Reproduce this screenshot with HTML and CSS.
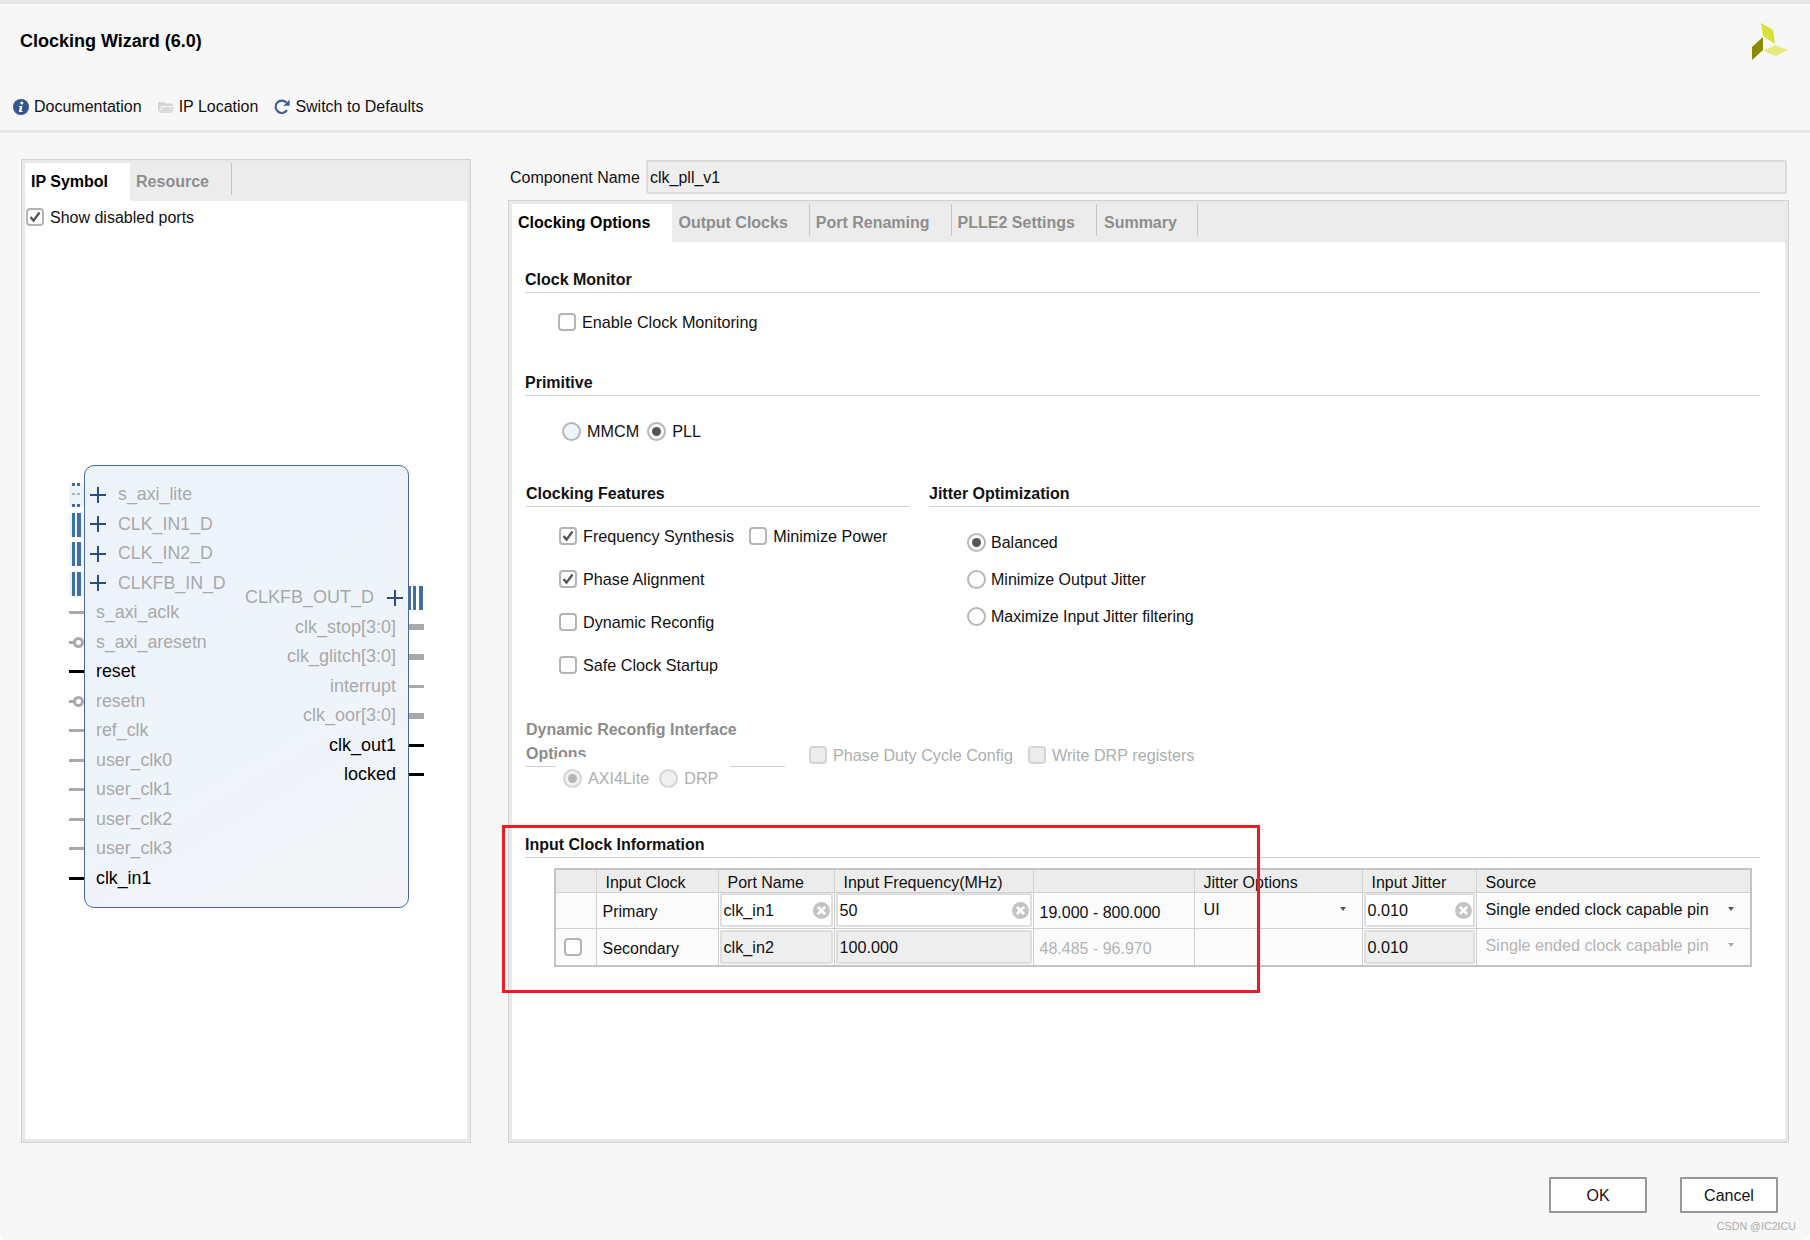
FILE: index.html
```html
<!DOCTYPE html>
<html lang="en">
<head>
<meta charset="utf-8">
<title>Clocking Wizard (6.0)</title>
<link rel="stylesheet" href="styles.css">
</head>
<body>
<svg class="sprite" aria-hidden="true">
  <symbol id="clear" viewBox="0 0 16 16">
    <circle cx="8" cy="8" r="8" fill="#c4c4c4"/>
    <path d="M4.6 4.6l6.8 6.8M11.4 4.6l-6.8 6.8" stroke="#fff" stroke-width="2.6"/>
  </symbol>
  <symbol id="check" viewBox="0 0 14 14">
    <path d="M2.5 7l3 3.6L11.5 2.5" fill="none" stroke="#555" stroke-width="2.4"/>
  </symbol>
</svg>
<div class="app">
  <header class="head">
    <div class="title-row">
      <div class="title">Clocking Wizard (6.0)</div>
      <svg class="logo" viewBox="0 0 37 38">
        <polygon points="9,0 21,7 23,21 11,13" fill="#d9e136"/>
        <polygon points="11,14 11,27 0,37 0,24" fill="#8b8b00"/>
        <polygon points="11,28 23,22 36,27 24,33" fill="#e6ea7c"/>
      </svg>
    </div>
    <nav class="toolbar">
      <span class="tool">
        <svg class="tool-ico" viewBox="0 0 16 16"><circle cx="8" cy="8" r="8" fill="#34558f"/><circle cx="8.8" cy="4" r="1.5" fill="#fff"/><path d="M6.2 7h3.2l-1 5h1.1v1H5.9l1-5H6z" fill="#fff"/></svg>
        Documentation
      </span>
      <span class="tool">
        <svg class="tool-ico" viewBox="0 0 16 16"><path d="M0 3h6l1.5 1.5H15V7H3L1 13H0z" fill="#d6d6d6"/><path d="M3.5 8H16l-2 6H1.2z" fill="#dcdcdc"/></svg>
        IP Location
      </span>
      <span class="tool">
        <svg class="tool-ico" viewBox="0 0 16 16"><path d="M13 11.2A6.2 6.2 0 1 1 12.4 3.6" fill="none" stroke="#3d5f99" stroke-width="2.2"/><path d="M15.6 0.6v6.2H9.4z" fill="#3d5f99"/></svg>
        Switch to Defaults
      </span>
    </nav>
  </header>

  <main class="main">
    <section class="left-panel">
      <div class="tabs">
        <div class="tab active">IP Symbol</div>
        <div class="tab">Resource</div>
      </div>
      <div class="panel-body">
        <label class="opt show-ports"><span class="cb"><svg class="tick"><use href="#check"/></svg></span>Show disabled ports</label>
        <div class="symbol">
          <div class="pins-left">
            <div class="pin bus"><svg class="dots" viewBox="0 0 15 24"><rect width="15" height="24" fill="#eef3fa"/><rect x="3" width="3" height="3" fill="#3f6fa5"/><rect x="8" width="3" height="3" fill="#3f6fa5"/><rect x="3" y="10" width="3" height="2" fill="#9db8d6"/><rect x="8" y="10" width="3" height="2" fill="#9db8d6"/><rect x="3" y="21" width="3" height="3" fill="#3f6fa5"/><rect x="8" y="21" width="3" height="3" fill="#3f6fa5"/></svg><span class="plus"></span>s_axi_lite</div>
            <div class="pin bus"><span class="bars-l"></span><span class="plus"></span>CLK_IN1_D</div>
            <div class="pin bus"><span class="bars-l"></span><span class="plus"></span>CLK_IN2_D</div>
            <div class="pin bus"><span class="bars-l"></span><span class="plus"></span>CLKFB_IN_D</div>
            <div class="pin"><span class="stub"></span>s_axi_aclk</div>
            <div class="pin"><span class="stub inv"></span>s_axi_aresetn</div>
            <div class="pin on"><span class="stub"></span>reset</div>
            <div class="pin"><span class="stub inv"></span>resetn</div>
            <div class="pin"><span class="stub"></span>ref_clk</div>
            <div class="pin"><span class="stub"></span>user_clk0</div>
            <div class="pin"><span class="stub"></span>user_clk1</div>
            <div class="pin"><span class="stub"></span>user_clk2</div>
            <div class="pin"><span class="stub"></span>user_clk3</div>
            <div class="pin on"><span class="stub"></span>clk_in1</div>
          </div>
          <div class="pins-right">
            <div class="pin bus">CLKFB_OUT_D<span class="plus"></span><span class="bars-r"></span></div>
            <div class="pin">clk_stop[3:0]<span class="stub thick"></span></div>
            <div class="pin">clk_glitch[3:0]<span class="stub thick"></span></div>
            <div class="pin">interrupt<span class="stub"></span></div>
            <div class="pin">clk_oor[3:0]<span class="stub thick"></span></div>
            <div class="pin on">clk_out1<span class="stub"></span></div>
            <div class="pin on">locked<span class="stub"></span></div>
          </div>
        </div>
      </div>
    </section>

    <section class="right-col">
      <div class="comp-row">
        <span class="comp-label">Component Name</span>
        <div class="comp-input">clk_pll_v1</div>
      </div>
      <div class="right-panel">
        <div class="tabs">
          <div class="tab active">Clocking Options</div>
          <div class="tab">Output Clocks</div>
          <div class="tab">Port Renaming</div>
          <div class="tab">PLLE2 Settings</div>
          <div class="tab">Summary</div>
        </div>
        <div class="form">
          <h3 class="sec">Clock Monitor</h3>
          <div class="row enable-row">
            <label class="opt"><span class="cb"></span>Enable Clock Monitoring</label>
          </div>

          <h3 class="sec primitive-head">Primitive</h3>
          <div class="row primitive-row">
            <label class="opt"><span class="rb pale"></span>MMCM</label>
            <label class="opt"><span class="rb sel"></span>PLL</label>
          </div>

          <div class="two-col">
            <div class="features">
              <h3 class="sec">Clocking Features</h3>
              <div class="row feature-first">
                <label class="opt"><span class="cb"><svg class="tick"><use href="#check"/></svg></span>Frequency Synthesis</label>
                <label class="opt"><span class="cb"></span>Minimize Power</label>
              </div>
              <div class="row feature-row"><label class="opt"><span class="cb"><svg class="tick"><use href="#check"/></svg></span>Phase Alignment</label></div>
              <div class="row feature-row"><label class="opt"><span class="cb"></span>Dynamic Reconfig</label></div>
              <div class="row feature-row"><label class="opt"><span class="cb"></span>Safe Clock Startup</label></div>
            </div>
            <div class="jitter">
              <h3 class="sec">Jitter Optimization</h3>
              <div class="jitter-list">
                <label class="opt"><span class="rb sel"></span>Balanced</label>
                <label class="opt"><span class="rb"></span>Minimize Output Jitter</label>
                <label class="opt"><span class="rb"></span>Maximize Input Jitter filtering</label>
              </div>
            </div>
          </div>

          <div class="drp">
            <div class="drp-legend">
              <div class="drp-title">Dynamic Reconfig Interface Options</div>
              <span class="drp-patch"></span>
            </div>
            <div class="drp-checks">
              <label class="opt off"><span class="cb"></span>Phase Duty Cycle Config</label>
              <label class="opt off"><span class="cb"></span>Write DRP registers</label>
            </div>
          </div>
          <div class="row drp-radios">
            <label class="opt off"><span class="rb sel"></span>AXI4Lite</label>
            <label class="opt off"><span class="rb"></span>DRP</label>
          </div>

          <h3 class="sec input-head">Input Clock Information</h3>
          <table class="clock-table">
            <colgroup>
              <col class="c1"><col class="c2"><col class="c3"><col class="c4"><col class="c5"><col class="c6"><col class="c7"><col class="c8">
            </colgroup>
            <thead>
              <tr>
                <th></th><th>Input Clock</th><th>Port Name</th><th>Input Frequency(MHz)</th><th></th><th>Jitter Options</th><th>Input Jitter</th><th>Source</th>
              </tr>
            </thead>
            <tbody>
              <tr class="r1">
                <td></td>
                <td class="txt">Primary</td>
                <td class="box"><div class="field">clk_in1<svg class="clear"><use href="#clear"/></svg></div></td>
                <td class="box"><div class="field">50<svg class="clear"><use href="#clear"/></svg></div></td>
                <td class="txt range">19.000 - 800.000</td>
                <td class="sel-cell"><div class="select">UI<span class="arrow"></span></div></td>
                <td class="box"><div class="field">0.010<svg class="clear"><use href="#clear"/></svg></div></td>
                <td class="sel-cell"><div class="select">Single ended clock capable pin<span class="arrow"></span></div></td>
              </tr>
              <tr class="r2">
                <td class="cb-cell"><span class="cb"></span></td>
                <td class="txt">Secondary</td>
                <td class="box"><div class="field dis">clk_in2</div></td>
                <td class="box"><div class="field dis">100.000</div></td>
                <td class="txt range muted">48.485 - 96.970</td>
                <td></td>
                <td class="box"><div class="field dis">0.010</div></td>
                <td class="sel-cell"><div class="select muted">Single ended clock capable pin<span class="arrow pale-arrow"></span></div></td>
              </tr>
            </tbody>
          </table>
        </div>
      </div>
    </section>
  </main>

  <footer class="foot">
    <div class="buttons">
      <button class="btn" type="button">OK</button>
      <button class="btn" type="button">Cancel</button>
    </div>
    <div class="mark">CSDN @IC2ICU</div>
  </footer>

  <div class="highlight"></div>
</div>
</body>
</html>
```

FILE: styles.css
```css
*, *::before, *::after { box-sizing: border-box; }
html, body { margin: 0; padding: 0; background: #fff; }
body { font: 16px/26px "Liberation Sans", Arial, sans-serif; color: #111; }
.sprite { display: none; }

.app {
  position: relative;
  width: 1810px;
  height: 1240px;
  background: #f7f7f7;
  border-top: 4px solid #e6e6e6;
  border-radius: 0 0 8px 8px;
  overflow: hidden;
  display: flex;
  flex-direction: column;
}

/* header */
.head { height: 129px; border-bottom: 3px solid #e6e6e6; }
.title-row {
  height: 72px;
  display: flex;
  justify-content: space-between;
  align-items: center;
  padding: 2px 21px 0 20px;
}
.title { font-size: 18px; font-weight: 700; color: #000; }
.logo { width: 37px; height: 38px; margin-top: 2px; }
.toolbar { display: flex; gap: 16px; padding: 18px 0 0 13px; }
.tool { display: flex; align-items: center; gap: 5px; color: #111; }
.tool-ico { width: 16px; height: 16px; }

/* main */
.main { display: flex; gap: 37px; padding: 26px 21px 0; height: 1010px; }
.left-panel {
  width: 450px;
  border: 1px solid #d2d2d2;
  padding: 3px;
  background: #e9e9e9;
  display: flex;
  flex-direction: column;
}
.tabs { display: flex; height: 38px; background: #ececec; flex: none; }
.tab {
  height: 32px;
  line-height: 38px;
  padding: 0 22px 0 6px;
  font-weight: 700;
  color: #8e8e8e;
  border-right: 1px solid #c8c8c8;
  white-space: nowrap;
}
.tab.active {
  height: 38px;
  padding-right: 22px;
  background: #fff;
  color: #000;
  border-right: 0;
}
.right-panel .tab { padding-right: 21px; }
.right-panel .tab.active { padding-right: 22px; }
.right-panel .tab:last-child { padding: 0 20px 0 7px; }
.panel-body { flex: 1; background: #fff; padding-top: 3px; }

.opt { display: inline-flex; align-items: center; gap: 6px; height: 26px; padding-top: 2px; white-space: nowrap; color: #111; }
.cb {
  width: 18px; height: 18px;
  border: 2px solid #b4b4b4;
  border-radius: 4px;
  background: #fff;
  display: inline-flex;
  align-items: center;
  justify-content: center;
  flex: none;
}
.opt .cb, .opt .rb { margin-top: -2px; }
.row .opt, .drp-checks .opt { padding-top: 0; }
.row .opt .cb, .row .opt .rb, .drp-checks .opt .cb { margin-top: 0; }
.tick { width: 14px; height: 14px; }
.rb {
  width: 19px; height: 19px;
  border: 2px solid #b8b8b8;
  border-radius: 50%;
  background: #fff;
  display: inline-flex;
  align-items: center;
  justify-content: center;
  flex: none;
}
.rb.pale { background: #eef4fc; }
.rb.sel::after {
  content: "";
  width: 9px; height: 9px;
  border-radius: 50%;
  background: #555;
}
.opt.off { color: #aeaeae; }
.off .cb { background: #ececec; border-color: #d4d4d4; }
.off .rb { background: #f0f0f0; border-color: #d4d4d4; }
.off .rb.sel::after { background: #b5b5b5; }

.show-ports { margin-left: 1px; }

/* IP symbol */
.symbol {
  position: relative;
  width: 325px;
  height: 443px;
  margin: 233px 0 0 59px;
  border: 1.5px solid #47689f;
  border-radius: 10px;
  background: linear-gradient(150deg, #edf3fb 0%, #eff4fb 60%, #f4f4f6 100%);
  display: flex;
  justify-content: space-between;
  font-size: 17.8px;
}
.pins-left { padding-top: 14px; }
.pins-right { padding-top: 117px; text-align: right; font-size: 18px; }
.pin {
  position: relative;
  height: 29.5px;
  line-height: 29.5px;
  color: #a9a9a9;
  white-space: nowrap;
  display: flex;
  align-items: center;
}
.pins-left .pin { padding-left: 11px; }
.pins-left .pin.bus { padding-left: 5px; }
.pins-right .pin { padding-right: 12px; justify-content: flex-end; }
.pins-right .pin.bus { padding-right: 5px; }
.pin.on { color: #000; }

.plus {
  width: 16px; height: 16px;
  flex: none;
  background:
    linear-gradient(#2f4b86, #2f4b86) center / 16px 2px no-repeat,
    linear-gradient(#2f4b86, #2f4b86) center / 2px 16px no-repeat;
}
.pins-left .plus { margin-right: 12px; }
.pins-right .plus { margin-left: 13px; }

.stub {
  position: absolute;
  top: 50%;
  width: 15px;
  height: 3px;
  margin-top: -1.5px;
  background: #a9a9a9;
}
.pins-left .stub { left: -16px; }
.pins-right .stub { right: -16px; width: 15px; }
.stub.thick { height: 6px; margin-top: -3px; }
.on .stub { background: #000; }
.stub.inv {
  height: 11px;
  margin-top: -5.5px;
  overflow: hidden;
  background: linear-gradient(#a9a9a9, #a9a9a9) left center / 5px 3px no-repeat;
}
.stub.inv::after {
  content: "";
  position: absolute;
  left: 4px; top: 0;
  width: 11px; height: 11px;
  border: 3px solid #a9a9a9;
  border-radius: 50%;
}
.dots { position: absolute; left: -16px; top: 3px; width: 15px; height: 24px; }
.bars-l, .bars-r { position: absolute; top: 3px; height: 24px; }
.bars-l {
  left: -16px;
  width: 15px;
  background: linear-gradient(90deg, #eef3fa 0 3px, #3f6fa5 3px 6px, #eef3fa 6px 8px, #3f6fa5 8px 12px, #eef3fa 12px);
}
.bars-r {
  right: -16px;
  width: 15px;
  background: linear-gradient(90deg, #3f6fa5 0 2px, #fff 2px 4px, #3f6fa5 4px 7px, #fff 7px 10px, #3f6fa5 10px 14px, #fff 14px);
}

/* right column */
.right-col { width: 1281px; display: flex; flex-direction: column; }
.comp-row { display: flex; align-items: center; height: 35px; padding: 3px 2px 0 2px; flex: none; }
.comp-label { width: 136px; color: #111; }
.comp-input {
  flex: 1;
  height: 34px;
  margin-top: -2px;
  line-height: 32px;
  padding-left: 2px;
  background: #eeeeee;
  border: 2px solid #dcdcdc;
  border-radius: 2px;
  color: #111;
}
.right-panel {
  flex: 1;
  margin-top: 6px;
  border: 1px solid #d2d2d2;
  padding: 3px;
  background: #e9e9e9;
  display: flex;
  flex-direction: column;
}
.form { flex: 1; background: #fff; padding: 24px 25px 0 13px; font-size: 16.2px; }
.sec {
  margin: 0;
  height: 27px;
  line-height: 28px;
  font-size: 16px;
  font-weight: 700;
  color: #111;
  border-bottom: 1px solid #cfcfcf;
}
.row { display: flex; height: 26px; }
.enable-row { margin: 16px 0 0 33px; }
.primitive-head { margin-top: 34px; }
.primitive-row { margin: 22px 0 0 37px; gap: 8px; }
.two-col { display: flex; gap: 20px; margin: 36px 0 0 1px; }
.features { width: 383px; flex: none; }
.jitter { flex: 1; }
.feature-first { margin: 16px 0 0 33px; gap: 15px; }
.feature-row { margin: 17px 0 0 33px; }
.jitter-list { display: flex; flex-direction: column; align-items: flex-start; gap: 11px; margin: 22px 0 0 38px; font-size: 16px; }
.jitter-list .opt { gap: 5px; }

.drp { display: flex; margin: 40px 0 0 1px; }
.drp-legend {
  position: relative;
  width: 259px;
  height: 49px;
  border-bottom: 1px solid #cfcfcf;
  flex: none;
}
.drp-title {
  width: 215px;
  font-size: 16px;
  font-weight: 700;
  line-height: 24px;
  color: #8c8c8c;
}
.drp-patch {
  position: absolute;
  left: 30px; bottom: -2px;
  width: 174px; height: 11px;
  background: #fff;
}
.drp-checks { display: flex; gap: 15px; margin: 24px 0 0 24px; }
.drp-radios { margin: -3px 0 0 38px; gap: 10px; }

.input-head { margin-top: 40px; }

/* table */
.clock-table {
  table-layout: fixed;
  border-collapse: collapse;
  width: 1196px;
  margin: 10px 0 0 29px;
  border: 2px solid #c4c4c4;
  background: #fbfbfb;
  font-size: 16.2px;
}
.c1 { width: 41px; } .c2 { width: 122px; } .c3 { width: 116px; } .c4 { width: 199px; }
.c5 { width: 161px; } .c6 { width: 168px; } .c7 { width: 114px; } .c8 { width: 275px; }
.clock-table th {
  height: 23px;
  padding: 3px 0 0 9px;
  background: #ececec;
  border: 1px solid #d4d4d4;
  border-top: 0;
  border-bottom: 1px solid #d0d0d0;
  font-weight: 400;
  font-size: 16px;
  line-height: 19px;
  text-align: left;
  white-space: nowrap;
  color: #111;
}
.clock-table td {
  padding: 0;
  border: 1px solid #cfcfcf;
  vertical-align: top;
  white-space: nowrap;
  color: #111;
}
.r1 td { height: 36px; }
.r2 td { height: 37px; }
.clock-table .txt { padding: 6px 0 0 6px; line-height: 26px; font-size: 16px; }
.r2 .txt { padding-top: 7px; }
.clock-table .range { padding: 7px 0 0 6px; }
.clock-table .muted { color: #b4b4b4; }
.cb-cell .cb { margin: 9px 0 0 8px; }
.box { padding: 0 1px !important; }
.field {
  position: relative;
  height: 34px;
  line-height: 30px;
  padding-left: 2px;
  background: #fff;
  border: 2px solid #dedede;
  border-radius: 2px;
}
.field.dis { background: #eeeeee; margin-top: 1px; }
.clear {
  position: absolute;
  right: 1px; top: 7px;
  width: 17px; height: 17px;
}
.select {
  position: relative;
  height: 34px;
  line-height: 33px;
  padding-left: 9px;
}
.arrow {
  position: absolute;
  right: 16px; top: 14px;
  width: 0; height: 0;
  border-left: 3px solid transparent;
  border-right: 3px solid transparent;
  border-top: 4px solid #555;
}
.pale-arrow { border-top-color: #aaa; }

/* footer */
.foot { flex: 1; display: flex; flex-direction: column; align-items: flex-end; padding: 34px 32px 0 0; }
.buttons { display: flex; gap: 33px; }
.btn {
  width: 98px;
  height: 36px;
  background: #fff;
  border: 2px solid #989898;
  border-radius: 1px;
  font: 16px "Liberation Sans", Arial, sans-serif;
  color: #111;
  padding: 2px 0 0;
}
.mark { margin: 6px -18px 0 0; font-size: 10.7px; line-height: 14px; color: #aaa; }

.highlight {
  position: absolute;
  left: 502px; top: 821px;
  width: 758px; height: 168px;
  border: 3px solid #ed1c24;
  pointer-events: none;
}
```
